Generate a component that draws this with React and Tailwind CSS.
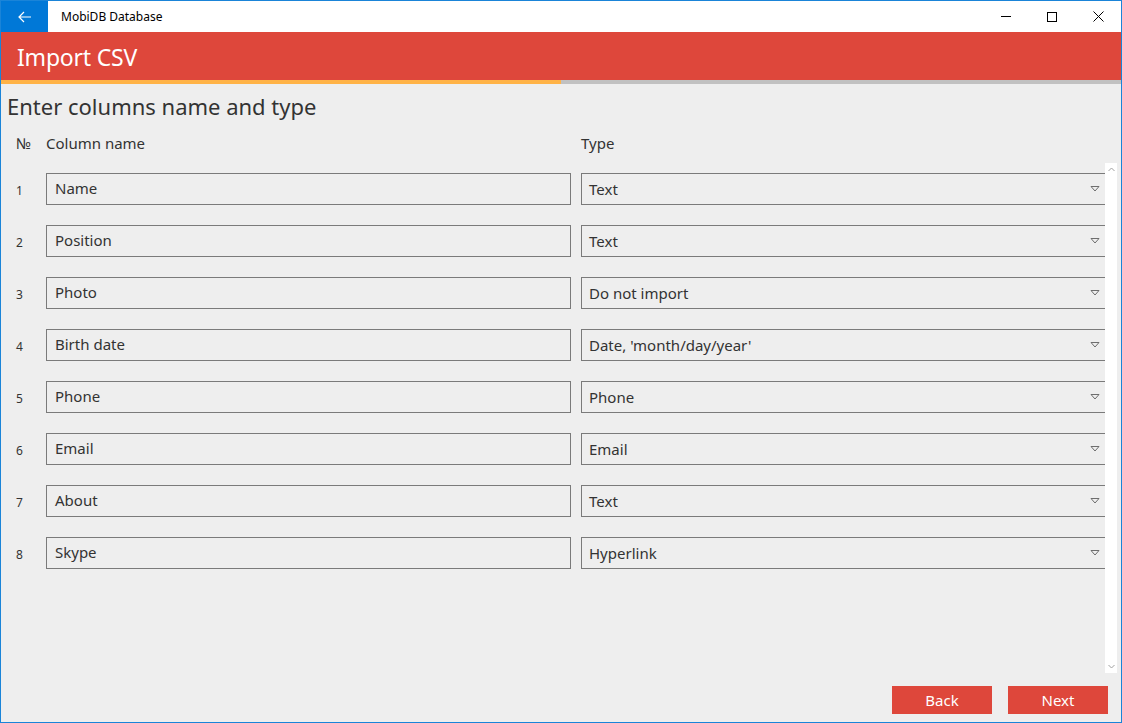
import React from "react";

const rows = [
  ["Name", "Text"],
  ["Position", "Text"],
  ["Photo", "Do not import"],
  ["Birth date", "Date, 'month/day/year'"],
  ["Phone", "Phone"],
  ["Email", "Email"],
  ["About", "Text"],
  ["Skype", "Hyperlink"],
];

const font = { fontFamily: '"Noto Sans", "Open Sans", sans-serif' };

function Caret() {
  return (
    <svg width="10" height="6" viewBox="0 0 10 6" className="shrink-0">
      <polygon points="1,0.5 9,0.5 5,5" fill="none" stroke="#6e6e6e" strokeWidth="1" />
    </svg>
  );
}

export default function App() {
  return (
    <div
      className="w-[1122px] h-[723px] border border-[#1a84d8] bg-[#eeeeee] flex flex-col overflow-hidden text-[#333333]"
      style={font}
    >
      {/* Title bar */}
      <div className="h-[31px] bg-white flex items-center shrink-0">
        <div className="w-[47px] h-full bg-[#0078d7] flex items-center justify-center">
          <svg width="14" height="12" viewBox="0 0 14 12">
            <path d="M6 1 L1 6 L6 11 M1 6 H13" fill="none" stroke="white" strokeWidth="1.2" />
          </svg>
        </div>
        <div className="ml-[13px] text-[12px] text-black">MobiDB Database</div>
        <div className="ml-auto flex h-full">
          <div className="w-[46px] h-full flex items-center justify-center">
            <div className="w-[10px] h-px bg-black" />
          </div>
          <div className="w-[46px] h-full flex items-center justify-center">
            <div className="w-[10px] h-[10px] border border-black" />
          </div>
          <div className="w-[46px] h-full flex items-center justify-center">
            <svg width="11" height="11" viewBox="0 0 11 11">
              <path d="M0.5 0.5 L10.5 10.5 M10.5 0.5 L0.5 10.5" stroke="black" strokeWidth="1" />
            </svg>
          </div>
        </div>
      </div>

      {/* Header */}
      <div className="h-[48px] bg-[#de473b] flex items-center pl-[16px] pt-[3px] shrink-0">
        <span className="text-white text-[23px] tracking-[-0.2px]">Import CSV</span>
      </div>
      <div className="h-[4px] flex shrink-0">
        <div className="w-[560px] bg-[#ffb347]" />
        <div className="flex-1 bg-[#c1c1c1]" />
      </div>

      {/* Heading */}
      <div className="mt-[7px] h-[30px] leading-[30px] pl-[6px] text-[22px] text-[#333333]">
        Enter columns name and type
      </div>

      {/* Column headers */}
      <div className="mt-[12px] h-[20px] leading-[20px] flex text-[15px]">
        <div className="w-[45px] pl-[15px]">№</div>
        <div className="w-[535px]">Column name</div>
        <div>Type</div>
      </div>

      {/* List + scrollbar */}
      <div className="mt-[10px] h-[510px] flex">
        <div className="flex-1 pt-[10px] flex flex-col gap-[20px]">
          {rows.map(([name, type], i) => (
            <div key={i} className="h-[32px] flex items-center">
              <div className="w-[45px] pl-[15px] pt-[3px] text-[12px]">{i + 1}</div>
              <div className="w-[525px] h-[32px] border border-[#7a7a7a] flex items-center pl-[8px] pb-[1px] text-[15px]">
                {name}
              </div>
              <div className="ml-[10px] flex-1 h-[32px] border-y border-l border-[#7a7a7a] flex items-center pl-[7px] pr-[5px] text-[15px]">
                <span>{type}</span>
                <span className="ml-auto">
                  <Caret />
                </span>
              </div>
            </div>
          ))}
        </div>
        <div className="w-[12px] bg-white flex flex-col items-center justify-between py-[4px] mr-[4px]">
          <svg width="7" height="5" viewBox="0 0 7 5">
            <path d="M0.5 4 L3.5 1 L6.5 4" fill="none" stroke="#a0a0a0" strokeWidth="1" />
          </svg>
          <svg width="7" height="5" viewBox="0 0 7 5">
            <path d="M0.5 1 L3.5 4 L6.5 1" fill="none" stroke="#a0a0a0" strokeWidth="1" />
          </svg>
        </div>
      </div>

      {/* Buttons */}
      <div className="mt-[13px] flex justify-end gap-[16px] pr-[13px]">
        <button className="w-[100px] h-[28px] bg-[#de473b] text-white text-[15px] leading-[28px]">Back</button>
        <button className="w-[100px] h-[28px] bg-[#de473b] text-white text-[15px] leading-[28px]">Next</button>
      </div>
    </div>
  );
}
